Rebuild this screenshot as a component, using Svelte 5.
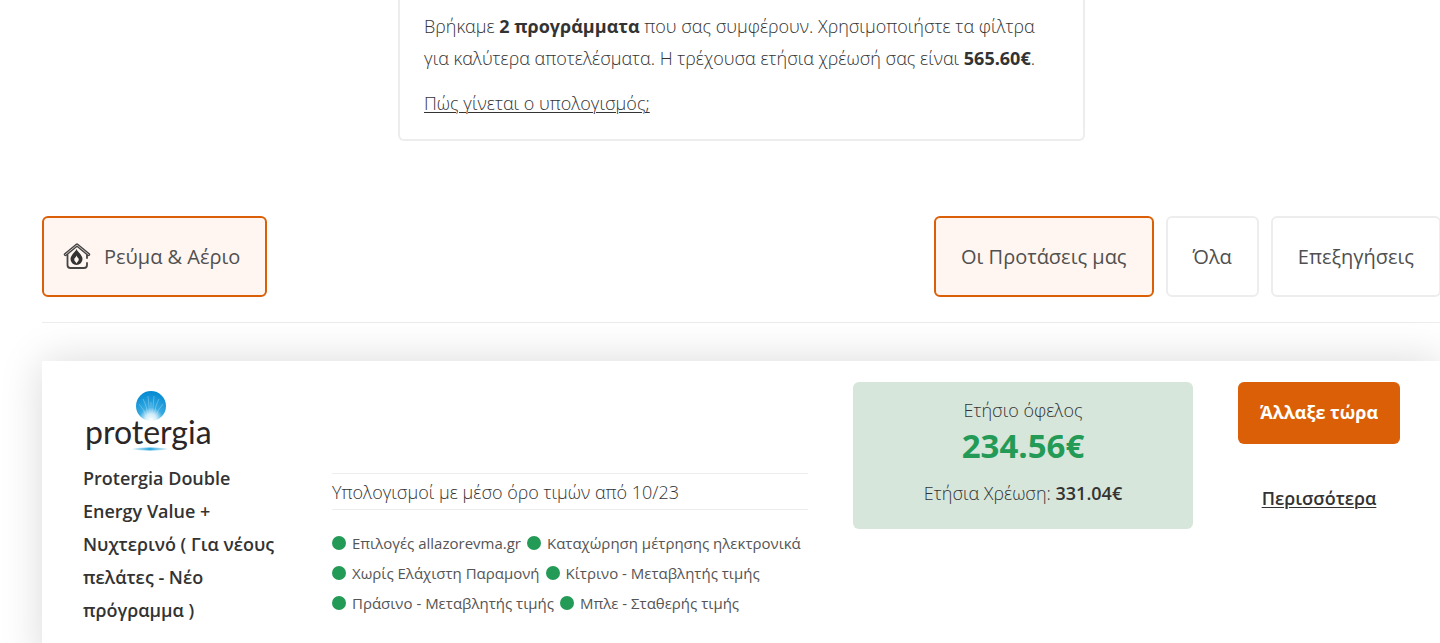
<script lang="ts">
	const tabs = ['Οι Προτάσεις μας', 'Όλα', 'Επεξηγήσεις'];
	let activeTab = $state(tabs[0]);

	const features = [
		'Επιλογές allazorevma.gr',
		'Καταχώρηση μέτρησης ηλεκτρονικά',
		'Χωρίς Ελάχιστη Παραμονή',
		'Κίτρινο - Μεταβλητής τιμής',
		'Πράσινο - Μεταβλητής τιμής',
		'Μπλε - Σταθερής τιμής'
	];
</script>

<main>
	<div class="container">
		<section class="summary">
			<p>
				Βρήκαμε <strong>2 προγράμματα</strong> που σας συμφέρουν. Χρησιμοποιήστε τα φίλτρα για
				καλύτερα αποτελέσματα. Η τρέχουσα ετήσια χρέωσή σας είναι <strong>565.60€</strong>.
			</p>
			<p><a href="#calculation">Πώς γίνεται ο υπολογισμός;</a></p>
		</section>

		<nav class="filters">
			<button class="tab active">
				<svg class="house" viewBox="0 0 28 28" aria-hidden="true">
					<g fill="none" stroke="#444" stroke-linecap="round" stroke-linejoin="round">
						<path stroke-width="1.8" d="M4.500 12v10q0 3 3 3h13.500q3 0 3-3V20M24 15v-3" />
						<path stroke-width="3.4" d="M2.500 11.500 14 2 25.500 11.500" />
						<path stroke="#fff6f1" stroke-width="0.7" d="M2.500 11.500 14 2 25.500 11.500" />
					</g>
					<path
						fill="#333"
						fill-rule="evenodd"
						d="M13.500 6c1 3 6 6 6 10a6 6 0 0 1-12 0c0-4 5-7 6-10Zm0 6.500c-.5 1.800-2.300 2.600-2.300 4s1.500 2.300 2.300 4c.8-1.700 2.300-2.600 2.300-4s-1.800-2.200-2.300-4Z"
					/>
				</svg>
				Ρεύμα &amp; Αέριο
			</button>
			<div class="tab-group">
				{#each tabs as tab}
					<button class="tab" class:active={tab === activeTab} onclick={() => (activeTab = tab)}>
						{tab}
					</button>
				{/each}
			</div>
		</nav>

		<article class="card">
			<div class="provider">
				<svg class="logo" viewBox="0 0 134 80" role="img" aria-label="protergia">
					<defs>
						<radialGradient id="globe" cx="50%" cy="95%" r="90%">
							<stop offset="0" stop-color="#fff" />
							<stop offset="0.2" stop-color="#d5eef9" />
							<stop offset="0.45" stop-color="#35aae2" />
							<stop offset="1" stop-color="#078bd2" />
						</radialGradient>
						<linearGradient id="glow">
							<stop offset="0" stop-color="#29a6df" stop-opacity="0" />
							<stop offset="0.5" stop-color="#29a6df" />
							<stop offset="1" stop-color="#29a6df" stop-opacity="0" />
						</linearGradient>
					</defs>
					<circle cx="68" cy="24" r="15" fill="url(#globe)" />
					<path
						fill="none"
						stroke="#c9ecfb"
						stroke-opacity="0.5"
						stroke-width="0.7"
						d="M67 36 65 14M69 36l2-22M65 36q-1-12-5-19M71 36q1-12 5-19M64 36q-3-9-8-14M72 36q3-9 8-14M68 36V20"
					/>
					<text x="2" y="62">protergia</text>
					<ellipse cx="67" cy="67" rx="19" ry="1.500" fill="url(#glow)" />
				</svg>
				<h2>Protergia Double Energy Value + Νυχτερινό ( Για νέους πελάτες - Νέο πρόγραμμα )</h2>
			</div>

			<div class="details">
				<p class="note">Υπολογισμοί με μέσο όρο τιμών από 10/23</p>
				<ul>
					{#each features as feature}
						<li>{feature}</li>
					{/each}
				</ul>
			</div>

			<div class="price">
				<span>Ετήσιο όφελος</span>
				<strong class="benefit">234.56€</strong>
				<span>Ετήσια Χρέωση: <strong>331.04€</strong></span>
			</div>

			<div class="actions">
				<button class="switch">Άλλαξε τώρα</button>
				<a href="#more">Περισσότερα</a>
			</div>
		</article>
	</div>
</main>

<style>
	:global(body) {
		margin: 0;
		background: #fff;
		color: #333;
		font: 300 18px/32px 'Open Sans', 'Noto Sans', sans-serif;
	}

	main {
		min-height: 100vh;
		overflow: hidden;
	}

	.container {
		margin: 0 -1px 0 42px;
	}

	p,
	h2,
	ul {
		margin: 0;
		padding: 0;
	}

	strong {
		font-weight: 600;
	}

	a {
		color: inherit;
		text-underline-offset: 2px;
		text-decoration-thickness: 1px;
	}

	button {
		color: inherit;
		font: inherit;
		cursor: pointer;
	}

	.summary {
		box-sizing: border-box;
		max-width: 687px;
		margin: 0 auto 75px;
		padding: 10px 24px 20px;
		border: 2px solid #ededed;
		border-top: 0;
		border-radius: 0 0 6px 6px;
	}

	.summary p + p {
		margin-top: 13px;
	}

	.summary strong {
		font-weight: 700;
	}

	.filters {
		display: flex;
		justify-content: space-between;
		padding-bottom: 25px;
		border-bottom: 1px solid #ededed;
	}

	.tab-group {
		display: flex;
		gap: 12px;
	}

	.tab {
		display: flex;
		align-items: center;
		height: 81px;
		padding: 0 25px;
		border: 2px solid #ededed;
		border-radius: 6px;
		background: #fff;
		color: #505050;
		font-size: 20px;
		font-weight: 400;
		white-space: nowrap;
	}

	.tab.active {
		border-color: #db5f07;
		background: #fff6f1;
	}

	.house {
		width: 28px;
		height: 28px;
		margin: 0 13px 0 -6px;
	}

	.card {
		display: grid;
		grid-template-columns: 204fr 476fr 340fr 162fr;
		gap: 45px;
		align-items: start;
		margin-top: 38px;
		padding: 21px 41px 40px;
		background: #fff;
		box-shadow: 0 0 40px rgba(0, 0, 0, 0.15);
	}

	.logo {
		display: block;
		width: 134px;
		height: 80px;
	}

	.logo text {
		fill: #2b2627;
		font: 400 32px Lato, sans-serif;
	}

	h2 {
		font-size: 18px;
		line-height: 33px;
		font-weight: 600;
	}

	.details {
		padding-top: 91px;
	}

	.note {
		padding: 2px 0 1px;
		border: solid #ededed;
		border-width: 1px 0;
	}

	ul {
		display: flex;
		flex-wrap: wrap;
		column-gap: 6px;
		margin-top: 18px;
		list-style: none;
		color: #555;
		font-size: 15px;
		font-weight: 400;
		line-height: 30px;
	}

	li {
		display: flex;
		align-items: center;
		gap: 6px;
	}

	li::before {
		content: '';
		width: 14px;
		height: 14px;
		border-radius: 50%;
		background: #249a57;
	}

	.price {
		display: flex;
		flex-direction: column;
		align-items: center;
		padding: 12px 16px 20px;
		border-radius: 6px;
		background: #d6e6db;
	}

	.benefit {
		margin-bottom: 12px;
		color: #249a57;
		font-size: 33px;
		font-weight: 700;
		line-height: 39px;
	}

	.actions {
		display: flex;
		flex-direction: column;
		align-items: center;
		gap: 38px;
	}

	.actions a {
		font-weight: 600;
	}

	.switch {
		width: 100%;
		height: 62px;
		padding: 0 0 2px;
		border: 0;
		border-radius: 6px;
		background: #db5f07;
		color: #fff;
		font-weight: 700;
		white-space: nowrap;
	}
</style>
